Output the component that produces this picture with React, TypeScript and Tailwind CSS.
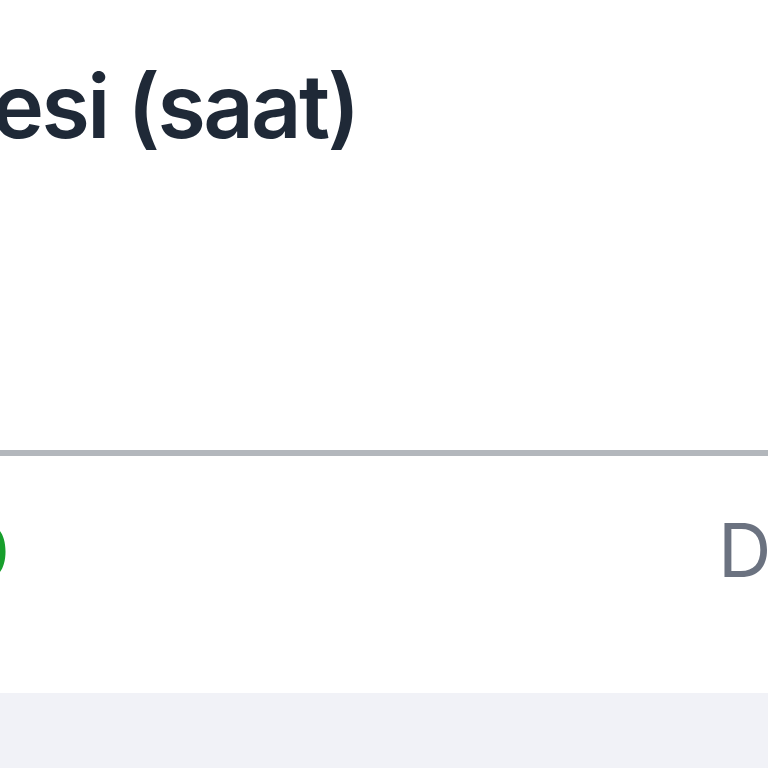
export default function App() {
  return (
    <div className="w-[768px] h-[768px] overflow-hidden bg-white flex flex-col" style={{ fontFamily: "Inter, 'Noto Sans', sans-serif" }}>
      <div className="h-[693px] bg-white flex flex-col shrink-0">
        <div className="pt-[62px] -ml-[8px]">
          <h2 className="text-[88px] leading-none font-semibold text-[#1f2937] whitespace-nowrap tracking-[-2.6px]">esi (saat)</h2>
        </div>
        <div className="mt-[300px] h-[6px] bg-[#b3b7bc] shrink-0"></div>
        <div className="mt-[57px] flex flex-row items-start">
          <div className="w-[9px] flex justify-end overflow-visible">
            <span className="text-[76px] leading-none font-bold text-[#179f2c] whitespace-nowrap">10</span>
          </div>
          <div className="ml-[709px] flex">
            <span className="text-[74px] leading-none font-normal text-[#6b7280] whitespace-nowrap">Detail</span>
          </div>
        </div>
      </div>
      <div className="flex-1 bg-[#f1f2f7]"></div>
    </div>
  );
}
